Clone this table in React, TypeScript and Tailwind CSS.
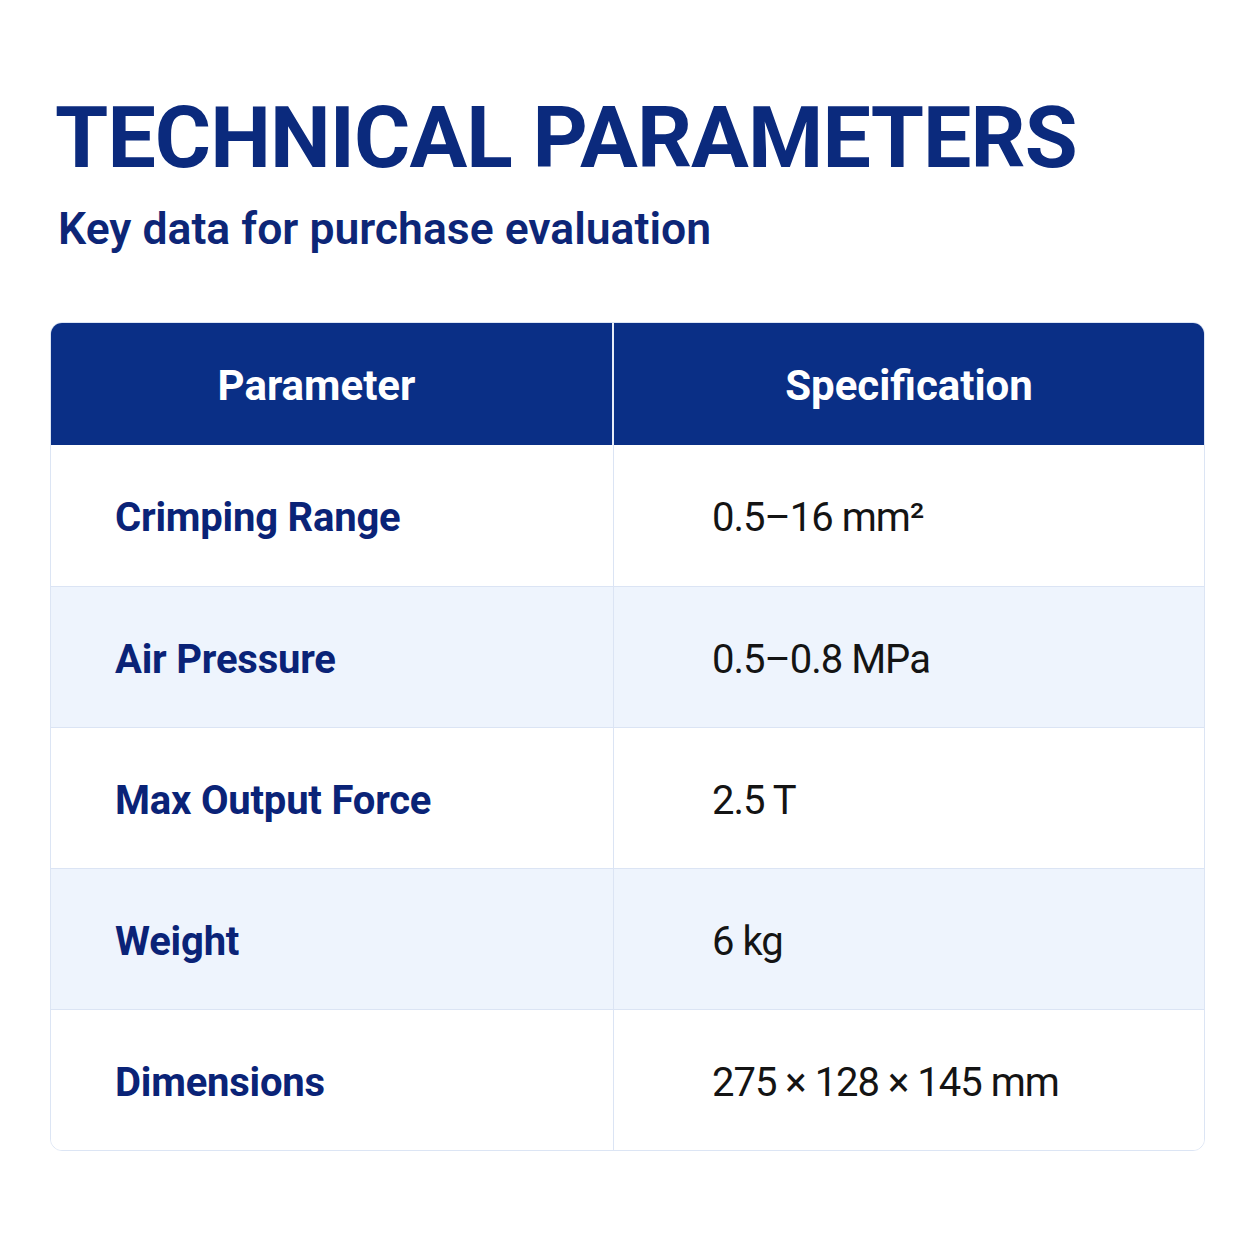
const rows = [
  { label: "Crimping Range", value: <>0.5–16 mm²</> },
  { label: "Air Pressure", value: <>0.5–0.8 MPa</> },
  { label: "Max Output Force", value: <>2.5 T</> },
  { label: "Weight", value: <>6 kg</> },
  { label: "Dimensions", value: <>275 × 128 × 145 mm</> },
];

export default function App() {
  return (
    <div className="w-[1254px] h-[1254px] bg-white font-['Roboto','Liberation_Sans',sans-serif]">
      <div className="pl-[50px] pr-[49px] pt-[95px]">
        <h1 className="pl-[5px] text-[86px] leading-none font-bold tracking-[-0.9px] text-[#0b2a7d]">TECHNICAL PARAMETERS</h1>
        <p className="mt-[26px] pl-[8px] text-[44.5px] leading-none font-semibold text-[#0d2677]">Key data for purchase evaluation</p>

        <div className="mt-[70px] rounded-[12px] border border-[#dce5f4] overflow-hidden">
          <div className="flex h-[122px] bg-[#0a2f86] text-white text-[42px] font-bold">
            <div className="w-[563px] flex items-center justify-center border-r-2 border-[#e6ecf8] pr-[30px] pt-[4px]">Parameter</div>
            <div className="flex-1 flex items-center justify-center pt-[4px]">Specification</div>
          </div>
          {rows.map((r, i) => (
            <div key={r.label} className={`flex h-[141px] ${i > 0 ? "border-t border-[#dbe4f4]" : ""} ${i % 2 === 1 ? "bg-[#eef4fd]" : "bg-white"}`}>
              <div className="w-[563px] flex items-center pl-[64px] pt-[6px] border-r border-[#dbe4f4] text-[40px] font-bold text-[#0a2377] tracking-[-0.2px]">{r.label}</div>
              <div className="flex-1 flex items-center pl-[98px] pt-[6px] text-[40px] text-[#141414] tracking-[-1px]">{r.value}</div>
            </div>
          ))}
        </div>
      </div>
    </div>
  );
}
